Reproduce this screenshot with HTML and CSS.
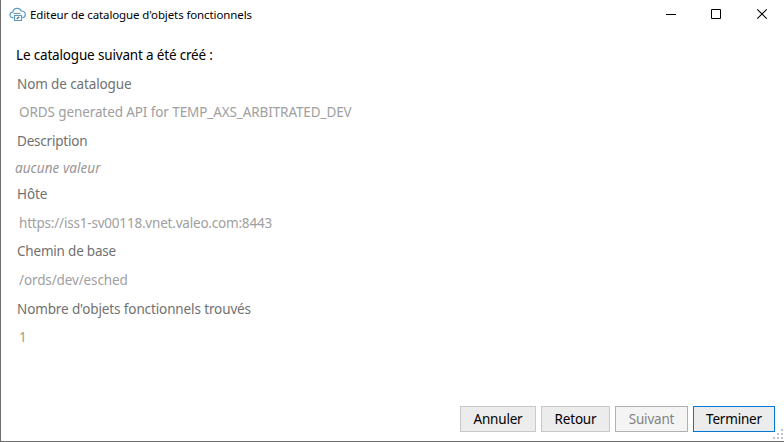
FILE: index.html
```
<!DOCTYPE html>
<html lang="fr">
<head>
<meta charset="utf-8">
<title>Editeur de catalogue d'objets fonctionnels</title>
<link rel="stylesheet" href="styles.css">
</head>
<body>
<div class="window">
  <header class="titlebar">
    <svg class="app-icon" width="18" height="16" viewBox="0 0 18 16" fill="none" stroke="#5b9cc4" stroke-width="1.2">
      <path d="M4.500 10.700H4C2.200 10.700 1 9.500 1 8c0-1.600 1.200-2.700 2.800-2.800C4.200 2.800 6 1.300 8.200 1.300c1.900 0 3.400 1 4 2.700 2.500-.2 4.100 1.300 4.100 3.400 0 1.900-1.200 3.200-3 3.300"/>
      <path d="M4.500 6.500H11.500" stroke="#7c98aa"/>
      <path d="M5.500 8.500H12.500V13.500H5.500Z"/>
      <path d="M7.800 12l2.400-2.300" stroke="#4c6f89"/>
    </svg>
    <h1 class="title"><span>Editeur de catalogue d'objets fonctionnels</span></h1>
    <svg class="controls" width="104" height="12" viewBox="0 0 104 12" fill="none" stroke="#000">
      <path d="M0 6.500H10"/>
      <path d="M45.500 1.500H54.500V10.500H45.500Z"/>
      <path d="M91.300 1.300L100.700 10.700M100.700 1.300L91.300 10.700" stroke-width="1.100"/>
    </svg>
  </header>
  <main class="content">
    <p class="intro"><span>Le catalogue suivant a été créé :</span></p>
    <dl class="fields">
      <dt class="catalog-label"><span>Nom de catalogue</span></dt>
      <dd class="catalog"><span>ORDS generated API for TEMP_AXS_ARBITRATED_DEV</span></dd>
      <dt class="description-label"><span>Description</span></dt>
      <dd class="empty"><span>aucune valeur</span></dd>
      <dt class="host-label"><span>Hôte</span></dt>
      <dd class="host"><span>https://iss1-sv00118.vnet.valeo.com:8443</span></dd>
      <dt class="path-label"><span>Chemin de base</span></dt>
      <dd class="path"><span>/ords/dev/esched</span></dd>
      <dt class="count-label"><span>Nombre d'objets fonctionnels trouvés</span></dt>
      <dd class="count"><span>1</span></dd>
    </dl>
  </main>
  <footer class="actions">
    <button class="button cancel">Annuler</button>
    <button class="button back">Retour</button>
    <button class="button next" disabled>Suivant</button>
    <button class="button finish">Terminer</button>
  </footer>
  <svg class="grip" width="11" height="11" viewBox="0 0 11 11" fill="#bfc3d2">
    <path d="M8 0h2v2H8zM4 4h2v2H4zM8 4h2v2H8zM0 8h2v2H0zM4 8h2v2H4zM8 8h2v2H8z"/>
  </svg>
</div>
</body>
</html>
```
FILE: styles.css
```
* { box-sizing: border-box; }
body { margin: 0; background: #fff; font: 13.5px/20px "Noto Sans", "Open Sans", sans-serif; color: #000; }
.window { position: relative; display: flex; flex-direction: column; width: 784px; height: 442px; border-left: 1px solid #6d6d6d; border-bottom: 1px solid #6d6d6d; overflow: hidden; white-space: nowrap; }
.titlebar { display: flex; align-items: center; height: 30px; padding: 0 14px 0 8px; }
.app-icon { flex: none; margin-top: -1px; }
.title { flex: 1; margin: 0 0 0 3px; font-size: 11.5px; font-weight: 400; letter-spacing: -.11px; }
.controls { flex: none; margin-top: -2px; }
.content { flex: 1; padding: 15px 0 0 15px; }
.intro { height: 29px; margin: 0; letter-spacing: -.17px; }
.fields { display: grid; grid-template-rows: 28px 29px 27px 26px 29px 28px 29px 29px 28px 20px; margin: 0; letter-spacing: -.12px; }
dt { padding-left: 1px; color: #717171; }
dd { margin: 0; padding-left: 3px; color: #a0a0a0; }
.catalog { letter-spacing: -.1px; }
.description-label { letter-spacing: -.21px; }
.empty { padding-left: 0; margin-left: -1px; font-style: italic; color: #979797; letter-spacing: .06px; }
.host { letter-spacing: -.2px; }
.path-label { letter-spacing: -.2px; }
.count { color: #a0a08a; }
.actions { display: flex; justify-content: flex-end; gap: 5px; height: 35px; padding: 0 9px 9px 0; }
.button { height: 26px; margin: 0; padding: 0; border: 1px solid #c8c8c8; border-radius: 0; background: #ececec; color: #000; font: inherit; letter-spacing: -.2px; }
.cancel { width: 76px; }
.back { width: 69px; }
.next { width: 73px; border-color: #adb2b5; background: #f4f4f4; color: #838383; }
.finish { width: 82px; border-color: #0078d7; }
.grip { position: absolute; right: 0; bottom: 1px; }
```
